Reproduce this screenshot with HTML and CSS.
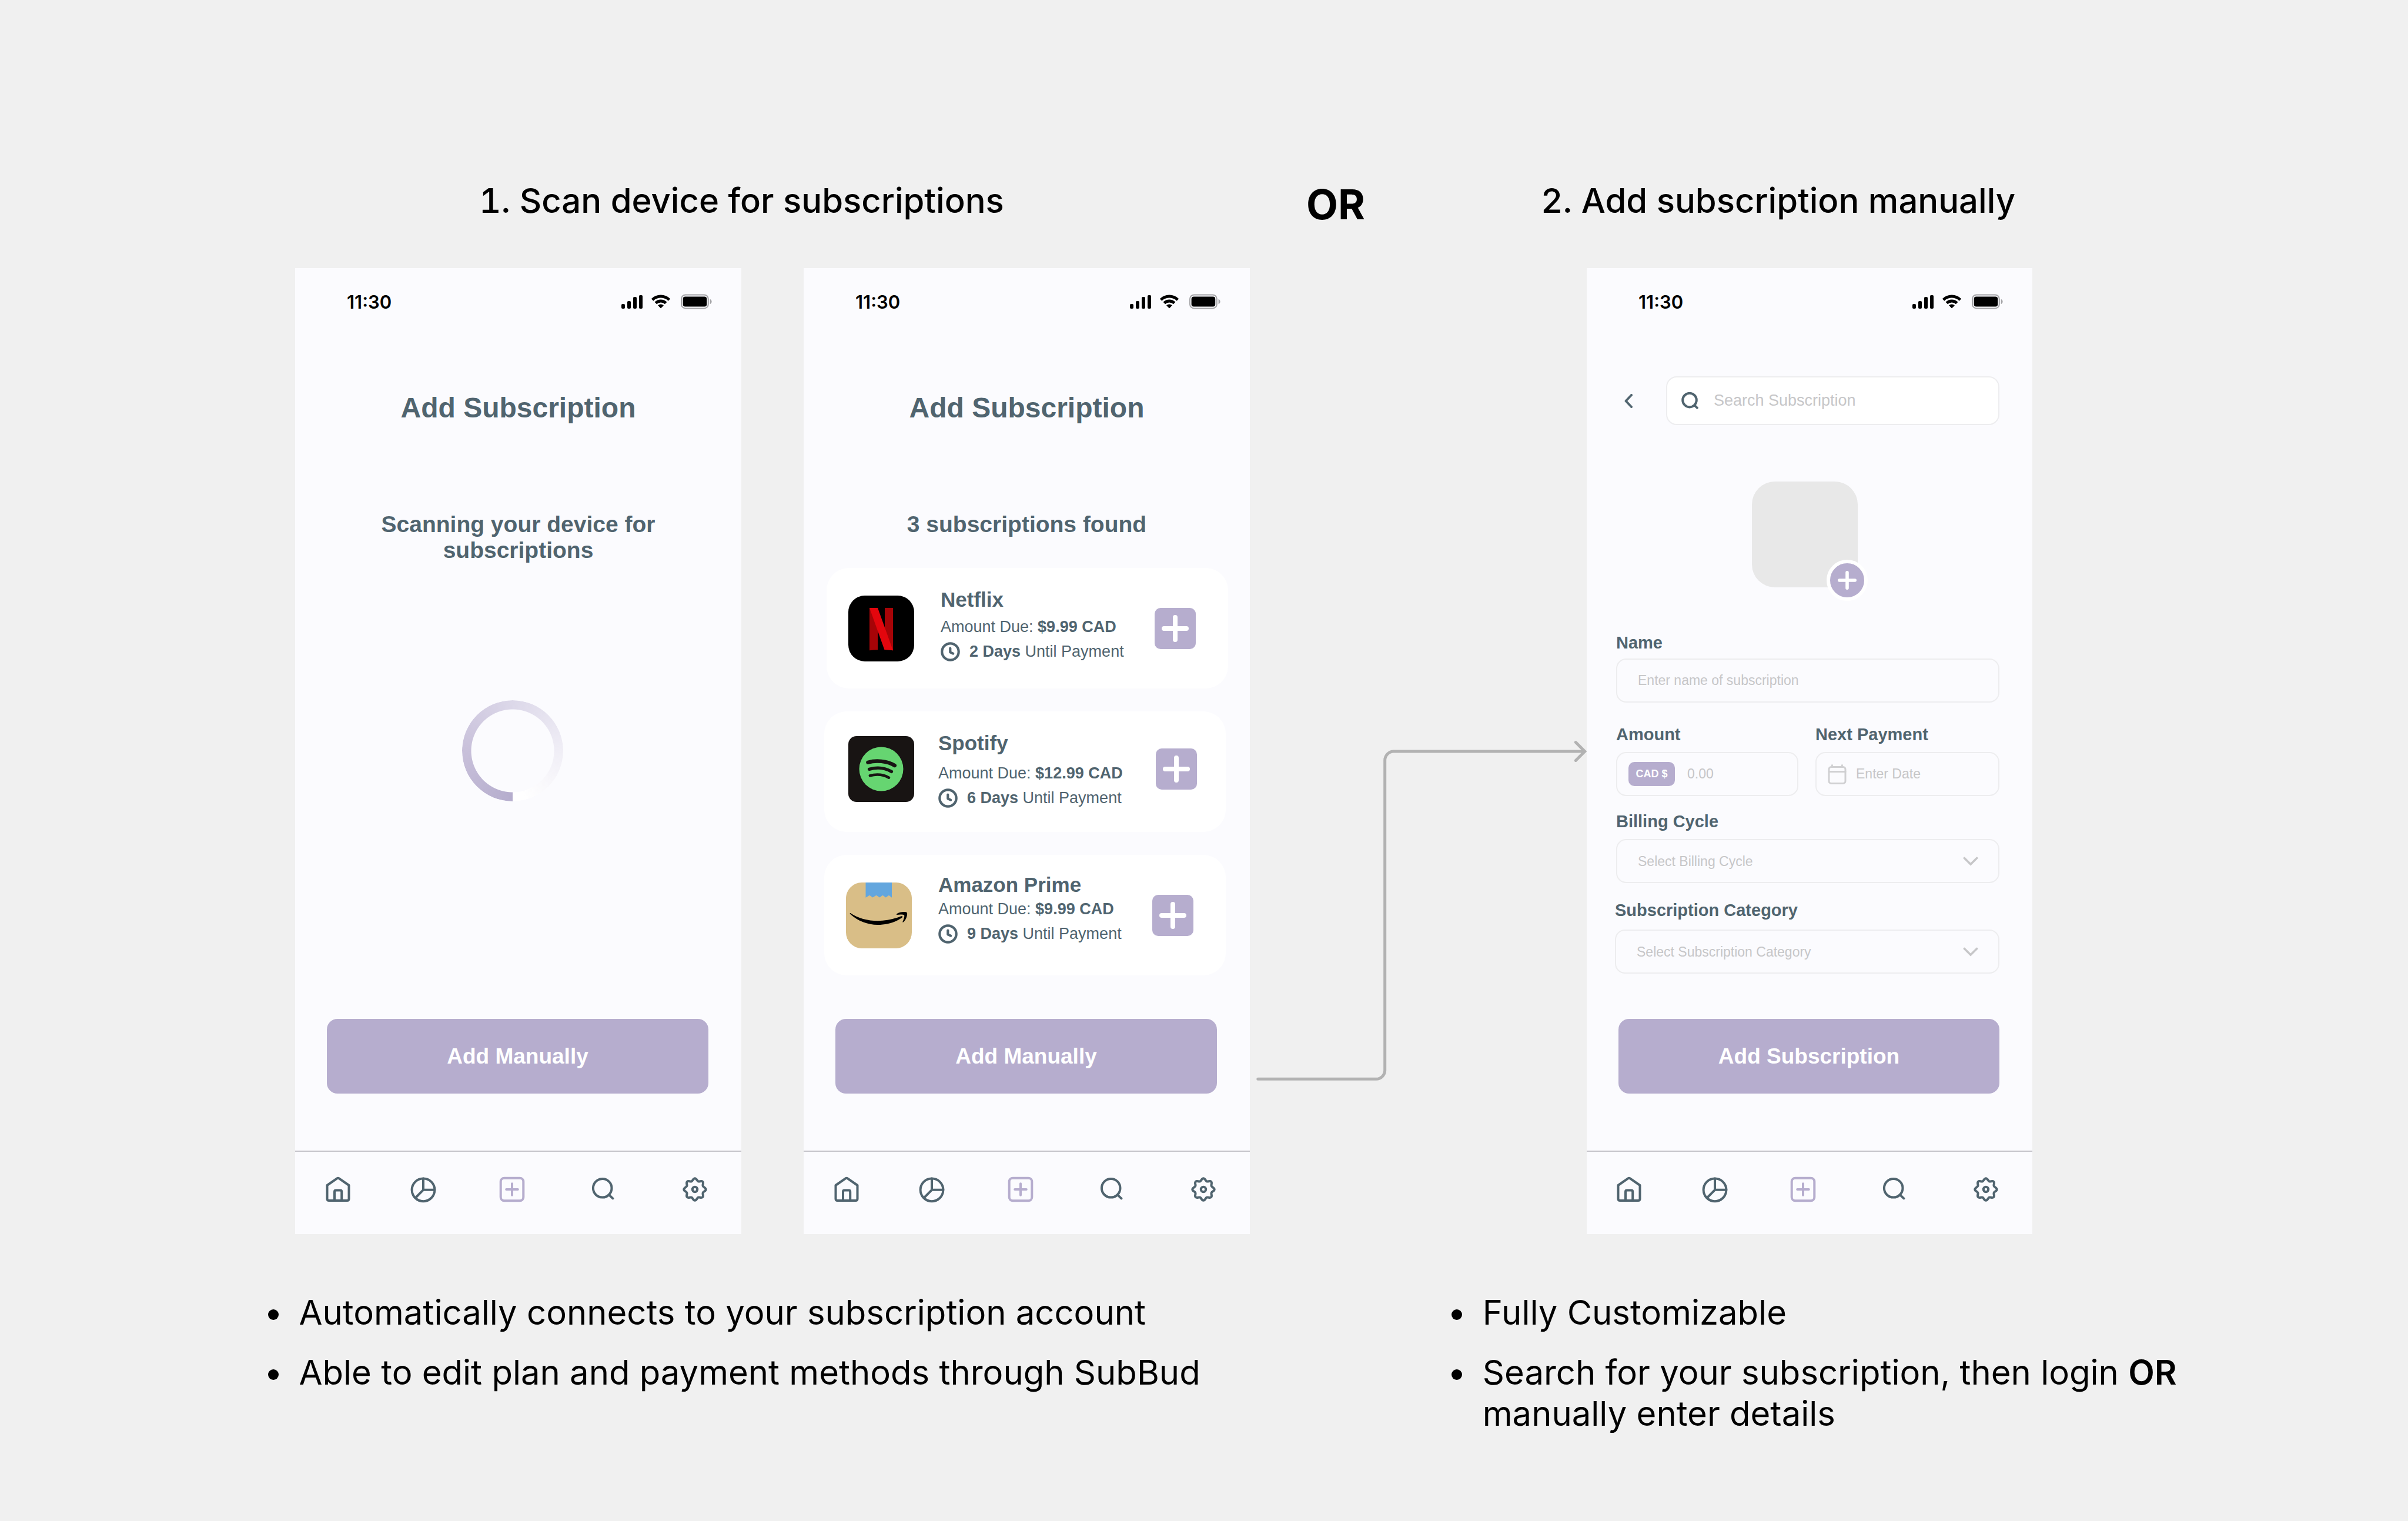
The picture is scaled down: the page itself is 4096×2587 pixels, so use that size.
FILE: index.html
```html
<!DOCTYPE html>
<html lang="en">
<head>
<meta charset="utf-8">
<meta name="viewport" content="width=device-width, initial-scale=1">
<title>SubBud – Adding a subscription</title>
<link rel="stylesheet" href="styles.css">
</head>
<body>
<svg class="sprite" aria-hidden="true">
  <symbol id="status" viewBox="0 0 154 28">
    <rect x="0" y="17" width="6" height="8" rx="2"/>
    <rect x="10" y="12" width="6" height="13" rx="2"/>
    <rect x="20" y="5" width="6" height="20" rx="2"/>
    <rect x="30" y="2" width="6" height="23" rx="2"/>
    <path d="M52.6 9.9A20.4 20.4 0 0 1 81.4 9.9M58.3 15.6A12.3 12.3 0 0 1 75.7 15.6" fill="none" stroke="#000" stroke-width="5"/>
    <path d="M67 23.8 62.6 19.6A6.6 6.6 0 0 1 71.4 19.6Z" stroke="#000" stroke-linejoin="round"/>
    <rect x="102" y="1.4" width="45.8" height="23" rx="7" fill="none" stroke="#a4a4a7" stroke-width="2"/>
    <rect x="104.6" y="4.4" width="40.6" height="17" rx="4"/>
    <path d="M150.6 8.8C154.6 10.4 154.6 15.6 150.6 17.2Z" fill="#a4a4a7"/>
  </symbol>
  <symbol id="home" viewBox="0 0 46 46">
    <path d="M4.5 16 21.6 4.2Q23 3.2 24.4 4.2L41.5 16V39Q41.5 42 38.5 42H7.5Q4.5 42 4.5 39Z"/>
    <path d="M17 42V27Q17 24.6 19.4 24.6H26.8Q29.2 24.6 29.2 27V42"/>
  </symbol>
  <symbol id="pie" viewBox="0 0 46 46">
    <circle cx="23" cy="23.8" r="19.4"/>
    <path d="M23 4.4V23.8H42.4M23 23.8 10 37"/>
  </symbol>
  <symbol id="add" viewBox="0 0 46 46">
    <rect x="3.7" y="3.7" width="38.6" height="38.6" rx="6"/>
    <path d="M23 13.2V32.8M13.2 23H32.8"/>
  </symbol>
  <symbol id="search" viewBox="0 0 46 46">
    <circle cx="21.7" cy="20.8" r="15.8"/>
    <path d="M33 32.4 39.4 38.4"/>
  </symbol>
  <symbol id="gear" viewBox="0 0 46 46">
    <path d="M23 4.3C26 4.3 26.4 8.3 28.7 9.3C31 10.3 34.1 7.7 36.2 9.8C38.3 11.9 35.7 15 36.7 17.3C37.7 19.6 41.7 20 41.7 23C41.7 26 37.7 26.4 36.7 28.7C35.7 31 38.3 34.1 36.2 36.2C34.1 38.3 31 35.7 28.7 36.7C26.4 37.7 26 41.7 23 41.7C20 41.7 19.6 37.7 17.3 36.7C15 35.7 11.9 38.3 9.8 36.2C7.7 34.1 10.3 31 9.3 28.7C8.3 26.4 4.3 26 4.3 23C4.3 20 8.3 19.6 9.3 17.3C10.3 15 7.7 11.9 9.8 9.8C11.9 7.7 15 10.3 17.3 9.3C19.6 8.3 20 4.3 23 4.3Z"/>
    <circle cx="23" cy="23" r="4.2"/>
  </symbol>
  <symbol id="clock" viewBox="0 0 33 33">
    <circle cx="16.5" cy="16.5" r="14.2" fill="none" stroke="currentColor" stroke-width="4.2"/>
    <path d="M16.3 10.6V17.3L21.2 19.6" fill="none" stroke="currentColor" stroke-width="4.2" stroke-linecap="round" stroke-linejoin="round"/>
  </symbol>
  <symbol id="plus" viewBox="0 0 46 46">
    <path d="M23 4V42M4 23H42" fill="none" stroke="currentColor" stroke-width="8" stroke-linecap="round"/>
  </symbol>
  <symbol id="chevron" viewBox="0 0 26 16">
    <path d="M2.4 2.4 13 13 23.6 2.4" fill="none" stroke="currentColor" stroke-width="3.6" stroke-linecap="round"/>
  </symbol>
</svg>

<header class="titles">
  <h2 class="title title-scan">1. Scan device for subscriptions</h2>
  <p class="or">OR</p>
  <h2 class="title">2. Add subscription manually</h2>
</header>

<main class="screens">
  <section class="phone phone-scanning" aria-label="Scanning">
    <div class="status"><span>11:30</span><svg class="status-icons"><use href="#status"/></svg></div>
    <div class="content">
      <h1 class="heading">Add Subscription</h1>
      <p class="message">Scanning your device for subscriptions</p>
      <div class="spinner" role="progressbar" aria-label="Scanning"></div>
      <button class="primary" type="button">Add Manually</button>
    </div>
    <nav class="tabs">
      <a href="#" aria-label="Home"><svg class="icon"><use href="#home"/></svg></a>
      <a href="#" aria-label="Reports"><svg class="icon"><use href="#pie"/></svg></a>
      <a href="#" aria-label="Add" class="active"><svg class="icon"><use href="#add"/></svg></a>
      <a href="#" aria-label="Search"><svg class="icon"><use href="#search"/></svg></a>
      <a href="#" aria-label="Settings"><svg class="icon"><use href="#gear"/></svg></a>
    </nav>
  </section>

  <section class="phone phone-found" aria-label="Subscriptions found">
    <div class="status"><span>11:30</span><svg class="status-icons"><use href="#status"/></svg></div>
    <div class="content">
      <h1 class="heading">Add Subscription</h1>
      <p class="message">3 subscriptions found</p>
      <div class="cards">
        <article class="card card-netflix">
          <svg class="logo" viewBox="0 0 112 112" role="img" aria-label="Netflix logo">
            <rect width="112" height="112" rx="28"/>
            <path d="M36 21H50V92.2Q43 92.4 36 93.2ZM62 21H76V93.2Q69 92.4 62 92Z" fill="#a70407"/>
            <path d="M36 21H50L76 93.2Q69 92.3 61.4 92Z" fill="#e3060d"/>
          </svg>
          <div class="info">
            <h3 class="name">Netflix</h3>
            <p class="line">Amount Due: <b>$9.99 CAD</b></p>
            <p class="line due"><svg class="clock"><use href="#clock"/></svg><span><b>2 Days</b> Until Payment</span></p>
          </div>
          <button class="add" type="button" aria-label="Add Netflix"><svg><use href="#plus"/></svg></button>
        </article>
        <article class="card card-spotify">
          <svg class="logo" viewBox="0 0 112 112" role="img" aria-label="Spotify logo">
            <rect width="112" height="112" rx="14" fill="#181413"/>
            <circle cx="56" cy="56" r="37.5" fill="#66d571"/>
            <g fill="none" stroke="#181413" stroke-linecap="round">
              <path d="M33.4 44.8C47 40.6 66 42.2 78.8 50" stroke-width="6.4"/>
              <path d="M35.6 56.3C48 52.8 62 53.8 73.4 60.4" stroke-width="5.4"/>
              <path d="M36.8 67.2C47 64.6 59 65 69 70.7" stroke-width="4.6"/>
            </g>
          </svg>
          <div class="info">
            <h3 class="name">Spotify</h3>
            <p class="line">Amount Due: <b>$12.99 CAD</b></p>
            <p class="line due"><svg class="clock"><use href="#clock"/></svg><span><b>6 Days</b> Until Payment</span></p>
          </div>
          <button class="add" type="button" aria-label="Add Spotify"><svg><use href="#plus"/></svg></button>
        </article>
        <article class="card card-amazon">
          <svg class="logo" viewBox="0 0 112 112" role="img" aria-label="Amazon Prime logo">
            <rect width="112" height="112" rx="27" fill="#d9be87"/>
            <path d="M33.5 0H78V25.8L73 21.7 67.8 25.4 62.4 21.7 57.3 25.4 51.5 21.7 45.5 25.4 40 21.7 33.5 25.8Z" fill="#63a6de"/>
            <path d="M7.5 52C20 61 38 65.3 54 65.2C68 65.2 82 62 94 57.3C96.5 56.6 97 58.6 95 60C84 68 68 72 54 72C37 72 20 65.5 7 53.5C6.3 52.5 6.7 51.6 7.5 52Z"/>
            <path d="M86.5 53.2C92 49.4 102 49.4 103.8 51.2C105 53.5 103 63 97.8 67.3C96.6 68 96 67.6 96.5 66.6C98.4 62 100 57 99 55.4C97.5 54 91 54.4 87 54.9C85.8 55 85.5 54 86.5 53.2Z"/>
          </svg>
          <div class="info">
            <h3 class="name">Amazon Prime</h3>
            <p class="line">Amount Due: <b>$9.99 CAD</b></p>
            <p class="line due"><svg class="clock"><use href="#clock"/></svg><span><b>9 Days</b> Until Payment</span></p>
          </div>
          <button class="add" type="button" aria-label="Add Amazon Prime"><svg><use href="#plus"/></svg></button>
        </article>
      </div>
      <button class="primary" type="button">Add Manually</button>
    </div>
    <nav class="tabs">
      <a href="#" aria-label="Home"><svg class="icon"><use href="#home"/></svg></a>
      <a href="#" aria-label="Reports"><svg class="icon"><use href="#pie"/></svg></a>
      <a href="#" aria-label="Add" class="active"><svg class="icon"><use href="#add"/></svg></a>
      <a href="#" aria-label="Search"><svg class="icon"><use href="#search"/></svg></a>
      <a href="#" aria-label="Settings"><svg class="icon"><use href="#gear"/></svg></a>
    </nav>
  </section>

  <svg class="connector" viewBox="0 0 573 600" aria-hidden="true">
    <path d="M13.8 587.3H214.7A15 15 0 0 0 229.7 572.3V45A15 15 0 0 1 244.7 30H569"/>
    <path d="M554.3 14.6 569.8 30 554.3 45.4"/>
  </svg>

  <section class="phone phone-manual" aria-label="Add manually">
    <div class="status"><span>11:30</span><svg class="status-icons"><use href="#status"/></svg></div>
    <form class="content">
      <div class="search-row">
        <button class="back" type="button" aria-label="Back">
          <svg viewBox="0 0 14 24"><path d="M12 2 2.6 12 12 22"/></svg>
        </button>
        <div class="search-box">
          <svg viewBox="0 0 30 30" class="search-icon"><circle cx="14" cy="13.6" r="11.8"/><path d="M22.6 22.6 26.8 26.6"/></svg>
          <input type="search" aria-label="Search Subscription" placeholder="Search Subscription">
        </div>
      </div>
      <div class="picture">
        <button class="picture-add" type="button" aria-label="Add picture"><svg><use href="#plus"/></svg></button>
      </div>
      <div class="field field-name">
        <label for="name">Name</label>
        <div class="control"><input id="name" type="text" placeholder="Enter name of subscription"></div>
      </div>
      <div class="pair">
        <div class="field">
          <label for="amount">Amount</label>
          <div class="control control-amount"><span class="currency">CAD $</span><input id="amount" type="text" placeholder="0.00"></div>
        </div>
        <div class="field">
          <label for="date">Next Payment</label>
          <div class="control control-date">
            <svg class="calendar" viewBox="0 0 32 36"><rect x="2" y="5.4" width="28" height="28" rx="4"/><path d="M2 13.6H30M7.4 2.4V5M24.4 2.4V5"/></svg>
            <input id="date" type="text" placeholder="Enter Date">
          </div>
        </div>
      </div>
      <div class="field field-cycle">
        <label for="cycle">Billing Cycle</label>
        <div class="control"><select id="cycle"><option>Select Billing Cycle</option></select><svg class="chevron"><use href="#chevron"/></svg></div>
      </div>
      <div class="field field-category">
        <label for="category">Subscription Category</label>
        <div class="control"><select id="category"><option>Select Subscription Category</option></select><svg class="chevron"><use href="#chevron"/></svg></div>
      </div>
      <button class="primary" type="button">Add Subscription</button>
    </form>
    <nav class="tabs">
      <a href="#" aria-label="Home"><svg class="icon"><use href="#home"/></svg></a>
      <a href="#" aria-label="Reports"><svg class="icon"><use href="#pie"/></svg></a>
      <a href="#" aria-label="Add" class="active"><svg class="icon"><use href="#add"/></svg></a>
      <a href="#" aria-label="Search"><svg class="icon"><use href="#search"/></svg></a>
      <a href="#" aria-label="Settings"><svg class="icon"><use href="#gear"/></svg></a>
    </nav>
  </section>
</main>

<footer class="notes">
  <ul>
    <li>Automatically connects to your subscription account</li>
    <li>Able to edit plan and payment methods through SubBud</li>
  </ul>
  <ul>
    <li>Fully Customizable</li>
    <li>Search for your subscription, then login <strong>OR</strong><br>manually enter details</li>
  </ul>
</footer>
</body>
</html>
```
FILE: styles.css
```css
:root {
  --slate: #50646f;
  --lilac: #b6adce;
  --hint: #c6c6c8;
  --line: #ededef;
  --screen: #fbfbfe;
}

* {
  box-sizing: border-box;
}

body {
  margin: 0;
  background: #f0f0f0;
  color: #000;
  font-family: Inter, "Liberation Sans", sans-serif;
  font-size: 58px;
  line-height: 70px;
}

h1, h2, h3, p, ul {
  margin: 0;
  padding: 0;
}

button, input, select {
  margin: 0;
  padding: 0;
  border: 0;
  background: none;
  font: inherit;
  color: inherit;
}

.sprite {
  display: none;
}

/* Titles above the screens */
.titles {
  display: grid;
  grid-template-columns: minmax(0, 815fr) minmax(0, 1407fr) minmax(0, 399fr) minmax(0, 1475fr);
  padding-top: 306px;
}

.title {
  font-size: 58px;
  font-weight: 500;
  font-variant-numeric: tabular-nums;
  white-space: nowrap;
}

.title-scan {
  grid-column: 2;
}

.or {
  font-size: 70px;
  line-height: 84px;
  font-weight: 700;
}

/* Row of phone screens */
.screens {
  display: grid;
  grid-template-columns:
    minmax(0, 502fr) minmax(0, 759fr) minmax(0, 106fr) minmax(0, 759fr)
    minmax(0, 573fr) minmax(0, 758fr) minmax(0, 639fr);
  margin-top: 66px;
}

.phone {
  display: flex;
  flex-direction: column;
  background: var(--screen);
  color: var(--slate);
  font-family: "Liberation Sans", Arial, sans-serif;
}

.phone-scanning { grid-column: 2; }
.phone-found { grid-column: 4; }
.phone-manual { grid-column: 6; }

.connector {
  grid-column: 5;
  width: 100%;
  margin-top: 792px;
  fill: none;
  stroke: #b2b2b2;
  stroke-width: 5;
  stroke-linecap: round;
}

.status {
  display: flex;
  justify-content: space-between;
  align-items: center;
  padding: 40px 50px 0 88px;
  color: #000;
  font: 600 31px/36px Inter, sans-serif;
}

.status-icons {
  width: 154px;
  height: 28px;
}

.content {
  flex: 1;
  display: flex;
  flex-direction: column;
}

.heading {
  margin-top: 134px;
  font-size: 48px;
  line-height: 56px;
  text-align: center;
}

.message {
  align-self: center;
  max-width: 520px;
  margin-top: 148px;
  font-size: 39px;
  font-weight: 700;
  line-height: 44px;
  text-align: center;
}

.spinner {
  align-self: center;
  width: 172px;
  height: 172px;
  margin: 233px 19px 0 0;
  border-radius: 50%;
  background: conic-gradient(from 180deg, #b5adcd, #c8c0da 25%, #dcd8e9 50%, #f0eef6 75%, #fff 96%);
  mask: radial-gradient(closest-side, transparent 70px, #000 71px);
}

.primary {
  height: 127px;
  margin: auto 56px 97px 54px;
  border-radius: 18px;
  background: var(--lilac);
  color: #fff;
  font-size: 37px;
  font-weight: 700;
}

/* Bottom tab bar */
.tabs {
  display: grid;
  grid-template-columns: 145fr 146fr 155fr 155fr 158fr;
  justify-items: center;
  padding: 41px 0 53px;
  border-top: 2px solid #c4c3c9;
}

.tabs a {
  height: 46px;
  color: var(--slate);
}

.tabs .active {
  color: var(--lilac);
}

.icon {
  display: block;
  width: 46px;
  height: 46px;
  fill: none;
  stroke: currentColor;
  stroke-width: 4;
  stroke-linecap: round;
  stroke-linejoin: round;
}

/* Found subscriptions */
.cards {
  display: flex;
  flex-direction: column;
  gap: 39px;
  margin: 52px 41px 0 35px;
}

.card {
  display: grid;
  grid-template-columns: 112px 1fr 70px;
  column-gap: 45px;
  align-items: center;
  height: 205px;
  padding: 0 55px 0 37px;
  border-radius: 38px;
  background: #fff;
}

.card-netflix {
  margin: 0 -4px 0 4px;
}

.card-spotify {
  column-gap: 41px;
  padding: 0 49px 10px 41px;
}

.logo {
  width: 112px;
  height: 112px;
}

.info {
  align-self: start;
  padding-top: 34px;
}

.card-amazon .info {
  padding-top: 31px;
}

.name {
  margin-bottom: 5px;
  font-size: 35px;
  line-height: 40px;
}

.card-spotify .name {
  margin-bottom: 10px;
}

.card-amazon .name {
  margin-bottom: 0;
}

.line {
  font-size: 27px;
  line-height: 42px;
  white-space: nowrap;
}

.due {
  display: flex;
  align-items: center;
  gap: 16px;
}

.clock {
  width: 33px;
  height: 33px;
}

.add {
  display: grid;
  place-items: center;
  width: 70px;
  height: 70px;
  border-radius: 10px;
  background: var(--lilac);
  color: #fff;
}

.add svg {
  width: 46px;
  height: 46px;
}

/* Manual entry form */
.search-row {
  display: flex;
  align-items: center;
  gap: 57px;
  margin: 108px 56px 0 64px;
}

.back {
  display: flex;
}

.back svg {
  width: 14px;
  height: 24px;
  fill: none;
  stroke: var(--slate);
  stroke-width: 4;
  stroke-linecap: round;
  stroke-linejoin: round;
}

.search-box {
  flex: 1;
  display: flex;
  align-items: center;
  gap: 25px;
  height: 83px;
  padding: 0 24px;
  border: 2px solid var(--line);
  border-radius: 18px;
  background: #fff;
}

.search-icon {
  width: 30px;
  height: 30px;
  fill: none;
  stroke: var(--slate);
  stroke-width: 4;
  stroke-linecap: round;
}

input {
  flex: 1;
  min-width: 0;
  height: 100%;
  outline: 0;
}

.search-box input {
  font-size: 27px;
  appearance: none;
}

input::placeholder {
  color: var(--hint);
  opacity: 1;
}

.picture {
  position: relative;
  align-self: center;
  width: 180px;
  height: 180px;
  margin: 96px 16px 0 0;
  border-radius: 39px;
  background: #e8e8e8;
}

.picture-add {
  position: absolute;
  right: -17px;
  bottom: -23px;
  display: grid;
  place-items: center;
  width: 70px;
  height: 70px;
  border: 6px solid #fff;
  border-radius: 50%;
  background: var(--lilac);
  color: #fff;
}

.picture-add svg {
  width: 32px;
  height: 32px;
}

.field {
  display: flex;
  flex-direction: column;
  gap: 13px;
  min-width: 0;
  font-size: 23px;
}

.field label {
  font-size: 29px;
  font-weight: 700;
  line-height: 34px;
}

.field-name {
  gap: 10px;
  margin: 77px 56px 0 50px;
}

.pair {
  display: grid;
  grid-template-columns: minmax(0, 310fr) minmax(0, 313fr);
  column-gap: 29px;
  margin: 37px 56px 0 50px;
}

.field-cycle {
  margin: 26px 56px 0 50px;
}

.field-category {
  gap: 16px;
  margin: 29px 56px 77px 48px;
}

.control {
  position: relative;
  display: flex;
  align-items: center;
  height: 75px;
  padding-left: 35px;
  border: 2px solid var(--line);
  border-radius: 17px;
}

.control select {
  flex: 1;
  height: 100%;
  appearance: none;
  color: var(--hint);
}

.chevron {
  position: absolute;
  right: 34px;
  width: 26px;
  height: 16px;
  color: var(--hint);
  pointer-events: none;
}

.control-amount {
  gap: 21px;
  padding-left: 19px;
}

.currency {
  width: 79px;
  border-radius: 10px;
  background: var(--lilac);
  color: #fff;
  font-size: 18px;
  font-weight: 700;
  line-height: 41px;
  text-align: center;
}

.control-date {
  gap: 16px;
  padding-left: 19px;
}

.calendar {
  width: 32px;
  height: 36px;
  fill: none;
  stroke: #d0d0d2;
  stroke-width: 3;
  stroke-linecap: round;
}

/* Notes below the screens */
.notes {
  display: grid;
  grid-template-columns: minmax(0, 2013fr) minmax(0, 1632fr);
  margin-top: 98px;
  padding: 0 0 140px 11%;
}

.notes ul {
  display: flex;
  flex-direction: column;
  gap: 32px;
  padding-left: 58px;
  list-style: none;
}

.notes li::before {
  content: "";
  display: inline-block;
  width: 18px;
  height: 18px;
  margin: 0 35px 0 -53px;
  border-radius: 50%;
  background: currentColor;
  vertical-align: 8px;
}

.notes strong {
  font-weight: 600;
}
```
